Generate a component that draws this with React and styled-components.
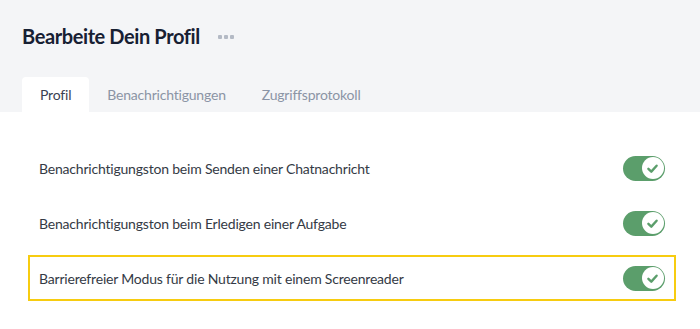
import React from 'react';
import styled, { createGlobalStyle } from 'styled-components';

const GlobalStyle = createGlobalStyle`
  html, body {
    margin: 0;
    padding: 0;
    background: #ffffff;
  }
  * {
    box-sizing: border-box;
  }
`;

const Page = styled.div`
  width: 700px;
  height: 329px;
  font-family: 'Lato', 'Liberation Sans', sans-serif;
  background: #ffffff;
  overflow: hidden;
`;

const Header = styled.header`
  background: #f4f5f7;
  padding: 0 22px;
`;

const TitleRow = styled.div`
  display: flex;
  align-items: center;
  gap: 18px;
  height: 77px;
  padding-bottom: 5px;
`;

const Title = styled.h1`
  margin: 0;
  font-size: 20px;
  font-weight: 700;
  color: #172033;
  letter-spacing: -0.4px;
`;

const Dots = styled.span`
  display: flex;
  gap: 2px;
  padding-top: 2px;
`;

const Dot = styled.i`
  width: 4px;
  height: 4px;
  border-radius: 1px;
  background: #b4bac5;
`;

const Tabs = styled.nav`
  display: flex;
  height: 35px;
`;

const Tab = styled.button`
  border: 0;
  margin: 0;
  font: inherit;
  font-size: 14px;
  letter-spacing: -0.2px;
  padding: 0 18px;
  border-radius: 4px 4px 0 0;
  background: ${({ $active }) => ($active ? '#ffffff' : 'transparent')};
  color: ${({ $active }) => ($active ? '#3b4252' : '#8b94a5')};
  cursor: pointer;
`;

const Content = styled.main`
  display: flex;
  flex-direction: column;
  gap: 9px;
  padding: 33px 24px 0 28px;
`;

const Row = styled.div`
  display: flex;
  align-items: center;
  justify-content: space-between;
  height: 46px;
  padding: 0 9px;
  border: 2px solid ${({ $focused }) => ($focused ? '#f7cc10' : 'transparent')};
`;

const Label = styled.span`
  font-size: 14px;
  letter-spacing: -0.2px;
  color: #343a45;
`;

const Toggle = styled.span`
  display: flex;
  align-items: center;
  justify-content: flex-end;
  width: 42px;
  height: 25px;
  padding: 0 1.5px;
  border-radius: 13px;
  background: #5b9e6b;
`;

const Knob = styled.span`
  display: flex;
  align-items: center;
  justify-content: center;
  width: 22px;
  height: 22px;
  border-radius: 50%;
  background: #ffffff;
`;

const Check = () => (
  <svg width="13" height="13" viewBox="0 0 12 12" fill="none">
    <path d="M2.2 6.3 L4.9 8.9 L9.8 3.4" stroke="#5b9e6b" strokeWidth="2.2" strokeLinecap="round" strokeLinejoin="round" />
  </svg>
);

const settings = [
  { label: 'Benachrichtigungston beim Senden einer Chatnachricht', focused: false },
  { label: 'Benachrichtigungston beim Erledigen einer Aufgabe', focused: false },
  { label: 'Barrierefreier Modus für die Nutzung mit einem Screenreader', focused: true },
];

const tabs = ['Profil', 'Benachrichtigungen', 'Zugriffsprotokoll'];

const App = () => (
  <Page>
    <GlobalStyle />
    <Header>
      <TitleRow>
        <Title>Bearbeite Dein Profil</Title>
        <Dots>
          <Dot />
          <Dot />
          <Dot />
        </Dots>
      </TitleRow>
      <Tabs>
        {tabs.map((tab, i) => (
          <Tab key={tab} $active={i === 0}>{tab}</Tab>
        ))}
      </Tabs>
    </Header>
    <Content>
      {settings.map(item => (
        <Row key={item.label} $focused={item.focused}>
          <Label>{item.label}</Label>
          <Toggle>
            <Knob>
              <Check />
            </Knob>
          </Toggle>
        </Row>
      ))}
    </Content>
  </Page>
);

export default App;
